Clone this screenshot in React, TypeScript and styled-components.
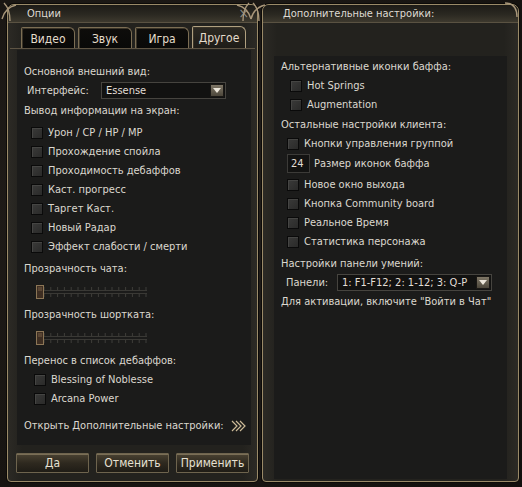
import React from "react";
import styled, { createGlobalStyle } from "styled-components";

const Global = createGlobalStyle`
  html, body { margin: 0; padding: 0; }
  body {
    background: radial-gradient(ellipse at 30% 40%, #221e1a 0%, #181512 70%, #120f0d 100%);
    font-family: "DejaVu Sans Condensed", "Liberation Sans", sans-serif;
    font-size: 11px;
    color: #dcd8cf;
    width: 522px;
    height: 487px;
    overflow: hidden;
  }
`;

const Screen = styled.div`
  display: flex;
  gap: 4px;
  padding: 4px 0 0 7px;
`;

const Window = styled.div<{ $w: number }>`
  position: relative;
  width: ${(p) => p.$w}px;
  height: 478px;
  box-sizing: border-box;
  border: 1px solid #9a8a68;
  border-radius: 7px 7px 4px 4px;
  background: linear-gradient(90deg, #2c2a25 0px, #23221e 14px, #23221e calc(100% - 14px), #2c2a25 100%);
  display: flex;
  flex-direction: column;
  box-shadow: 0 0 0 1px #0c0a08;
`;

const TitleBar = styled.div<{ $pad: number }>`
  height: 17px;
  flex: none;
  display: flex;
  align-items: center;
  justify-content: space-between;
  padding: 0 8px 0 ${(p) => p.$pad}px;
  background: linear-gradient(#1d1b17, #2a2821 55%, #3d392e);
  border-bottom: 1px solid #5a5242;
  border-radius: 6px 6px 0 0;
  color: #dedad2;
`;

const Close = styled.span`
  color: #8c8a86;
  font-size: 14px;
  line-height: 1;
  margin-top: -1px;
`;

const TabStrip = styled.div`
  display: flex;
  align-items: flex-end;
  gap: 3px;
  height: 21px;
  margin-top: 4px;
  padding-left: 11px;
  border-bottom: 1px solid #5e5444;
  margin-left: 2px;
  margin-right: 2px;
`;

const Tab = styled.div<{ $active?: boolean }>`
  box-sizing: border-box;
  width: 54px;
  height: ${(p) => (p.$active ? 22 : 21)}px;
  display: flex;
  align-items: center;
  justify-content: center;
  border: 1px solid ${(p) => (p.$active ? "#b0a080" : "#7c6e54")};
  border-bottom: none;
  border-radius: 2px 6px 0 0;
  background: ${(p) =>
    p.$active ? "linear-gradient(#2c2922, #1e1c18)" : "linear-gradient(#0e0d0b, #090908)"};
  box-shadow: inset 1px 1px 0 #3a3428;
  color: #e4dccb;
  font-size: 12px;
  padding-top: 1px;
`;

const Panel = styled.div<{ $mt: number; $ml: number; $mr: number; $mb: number; $pt: number }>`
  flex: 1;
  margin: ${(p) => `${p.$mt}px ${p.$mr}px ${p.$mb}px ${p.$ml}px`};
  padding: ${(p) => p.$pt}px 7px 0 7px;
  background: #1b1b1a;
  display: flex;
  flex-direction: column;
`;

const Row = styled.div<{ $indent?: number; $mt?: number; $h?: number }>`
  height: ${(p) => p.$h ?? 19}px;
  display: flex;
  align-items: center;
  padding-left: ${(p) => p.$indent ?? 0}px;
  margin-top: ${(p) => p.$mt ?? 0}px;
  white-space: nowrap;
  flex: none;
`;

const Box = styled.span`
  width: 12px;
  height: 12px;
  box-sizing: border-box;
  border: 1px solid #0a0a0a;
  background: linear-gradient(135deg, #3a3a39, #2a2a29);
  box-shadow: inset 1px 1px 0 #454543;
  margin-right: 5px;
  flex: none;
`;

const FieldLabel = styled.span<{ $w: number }>`
  width: ${(p) => p.$w}px;
  flex: none;
`;

const Select = styled.div<{ $w: number }>`
  box-sizing: border-box;
  width: ${(p) => p.$w}px;
  height: 17px;
  border: 1px solid #46443f;
  background: #121211;
  display: flex;
  align-items: center;
  justify-content: space-between;
  padding: 0 1px 0 4px;
  color: #e2ded6;
`;

const Arrow = styled.span`
  width: 14px;
  height: 13px;
  box-sizing: border-box;
  border: 1px solid #1a1815;
  background: linear-gradient(#7e7666, #4c463a);
  display: flex;
  align-items: center;
  justify-content: center;
  &::after {
    content: "";
    border-left: 4px solid transparent;
    border-right: 4px solid transparent;
    border-top: 5px solid #ece6da;
  }
`;

const NumInput = styled.span`
  box-sizing: border-box;
  width: 23px;
  height: 19px;
  border: 1px solid #3c3b38;
  background: #131312;
  display: flex;
  align-items: center;
  padding-left: 3px;
  margin-right: 4px;
  color: #e2ded6;
`;

const SliderRow = styled.div<{ $mt?: number }>`
  height: 26px;
  display: flex;
  align-items: center;
  padding-left: 12px;
  margin-top: ${(p) => p.$mt ?? 0}px;
  flex: none;
`;

const Buttons = styled.div`
  display: flex;
  gap: 7px;
  padding: 8px 0 0 8px;
  height: 28px;
  flex: none;
`;

const Button = styled.div`
  box-sizing: border-box;
  width: 73px;
  height: 20px;
  border: 1px solid #6e644e;
  border-radius: 1px;
  background: linear-gradient(#4a4232, #2e291f 50%, #1f1c16);
  box-shadow: inset 0 1px 0 #7a6e56;
  display: flex;
  align-items: center;
  justify-content: center;
  color: #e6e0d2;
  font-size: 12px;
`;

const OpenRow = styled.div`
  height: 19px;
  margin-top: 8px;
  margin-right: -3px;
  display: flex;
  align-items: center;
  justify-content: space-between;
  white-space: nowrap;
  flex: none;
`;

const Ornament = styled.svg<{ $x: number; $y: number }>`
  position: absolute;
  left: ${(p) => p.$x}px;
  top: ${(p) => p.$y}px;
  overflow: visible;
  pointer-events: none;
`;

const Check = ({ children, indent = 7, mt = 0 }: { children: React.ReactNode; indent?: number; mt?: number }) => (
  <Row $indent={indent} $mt={mt}>
    <Box />
    {children}
  </Row>
);

const Slider = () => {
  const ticks = Array.from({ length: 16 }, (_, i) => 8 + i * 6.8);
  return (
    <svg width="112" height="16" viewBox="0 0 112 16">
      <line x1="0" y1="6.5" x2="111" y2="6.5" stroke="#3a3935" strokeWidth="1" />
      <line x1="0" y1="9.5" x2="111" y2="9.5" stroke="#3a3935" strokeWidth="1" />
      {ticks.map((x) => (
        <g key={x}>
          <line x1={x} y1="3" x2={x} y2="6" stroke="#3f3e3a" />
          <line x1={x} y1="10" x2={x} y2="13" stroke="#3f3e3a" />
        </g>
      ))}
      <rect x="0.5" y="1.5" width="7" height="13" fill="#3e2e22" stroke="#8c7656" />
      <rect x="2" y="3" width="4" height="4" fill="#5a4634" />
    </svg>
  );
};

const Chevrons = () => (
  <svg width="16" height="14" viewBox="0 0 16 14">
    {[0, 4, 8].map((d) => (
      <polyline key={d} points={`${d + 1},2 ${d + 6},7 ${d + 1},12`} fill="none" stroke="#cdbb98" strokeWidth="1.2" />
    ))}
  </svg>
);

const Curl = ({ flip }: { flip?: boolean }) => (
  <g transform={flip ? "scale(-1,1)" : undefined} fill="none" stroke="#a8967a" strokeWidth="1.4">
    <path d="M0 18 C2 10 6 6 14 4" />
    <path d="M2 2 C6 6 8 12 8 20" />
  </g>
);

export default function App() {
  return (
    <>
      <Global />
      <Screen>
        <Window $w={251}>
          <TitleBar $pad={19}>
            <span>Опции</span>
            <Close>×</Close>
          </TitleBar>
          <TabStrip>
            <Tab>Видео</Tab>
            <Tab>Звук</Tab>
            <Tab>Игра</Tab>
            <Tab $active>Другое</Tab>
          </TabStrip>
          <Panel $mt={1} $ml={9} $mr={6} $mb={0} $pt={12}>
            <Row>Основной внешний вид:</Row>
            <Row $indent={3}>
              <FieldLabel $w={74}>Интерфейс:</FieldLabel>
              <Select $w={125}>
                <span>Essense</span>
                <Arrow />
              </Select>
            </Row>
            <Row $mt={1}>Вывод информации на экран:</Row>
            <Check mt={3}>Урон / CP / HP / MP</Check>
            <Check>Прохождение спойла</Check>
            <Check>Проходимость дебаффов</Check>
            <Check>Каст. прогресс</Check>
            <Check>Таргет Каст.</Check>
            <Check>Новый Радар</Check>
            <Check>Эффект слабости / смерти</Check>
            <Row $mt={3}>Прозрачность чата:</Row>
            <SliderRow $mt={1}>
              <Slider />
            </SliderRow>
            <Row>Прозрачность шортката:</Row>
            <SliderRow $mt={1}>
              <Slider />
            </SliderRow>
            <Row>Перенос в список дебаффов:</Row>
            <Check indent={10}>Blessing of Noblesse</Check>
            <Check indent={10}>Arcana Power</Check>
            <OpenRow>
              <span>Открыть Дополнительные настройки:</span>
              <Chevrons />
            </OpenRow>
          </Panel>
          <Buttons>
            <Button>Да</Button>
            <Button>Отменить</Button>
            <Button>Применить</Button>
          </Buttons>
          <Ornament $x={-6} $y={-4} width="20" height="24">
            <Curl />
          </Ornament>
        </Window>
        <Window $w={257}>
          <TitleBar $pad={20}>
            <span>Дополнительные настройки:</span>
          </TitleBar>
          <Panel $mt={33} $ml={11} $mr={11} $mb={2} $pt={1}>
            <Row>Альтернативные иконки баффа:</Row>
            <Check indent={9}>Hot Springs</Check>
            <Check indent={9}>Augmentation</Check>
            <Row $mt={1}>Остальные настройки клиента:</Row>
            <Check indent={6}>Кнопки управления группой</Check>
            <Row $indent={6} $h={20}>
              <NumInput>24</NumInput>
              Размер иконок баффа
            </Row>
            <Check indent={6} mt={2}>Новое окно выхода</Check>
            <Check indent={6}>Кнопка Community board</Check>
            <Check indent={6}>Реальное Время</Check>
            <Check indent={6}>Статистика персонажа</Check>
            <Row $mt={3}>Настройки панели умений:</Row>
            <Row $indent={5}>
              <FieldLabel $w={51}>Панели:</FieldLabel>
              <Select $w={155}>
                <span>1: F1-F12; 2: 1-12; 3: Q-P</span>
                <Arrow />
              </Select>
            </Row>
            <Row>Для активации, включите "Войти в Чат"</Row>
          </Panel>
          <Ornament $x={-12} $y={-4} width="20" height="24">
            <Curl flip />
            <Curl />
          </Ornament>
          <Ornament $x={250} $y={-2} width="10" height="16">
            <path d="M-8 0 C0 0 4 4 4 14" fill="none" stroke="#a8967a" strokeWidth="1.4" />
          </Ornament>
        </Window>
      </Screen>
    </>
  );
}
